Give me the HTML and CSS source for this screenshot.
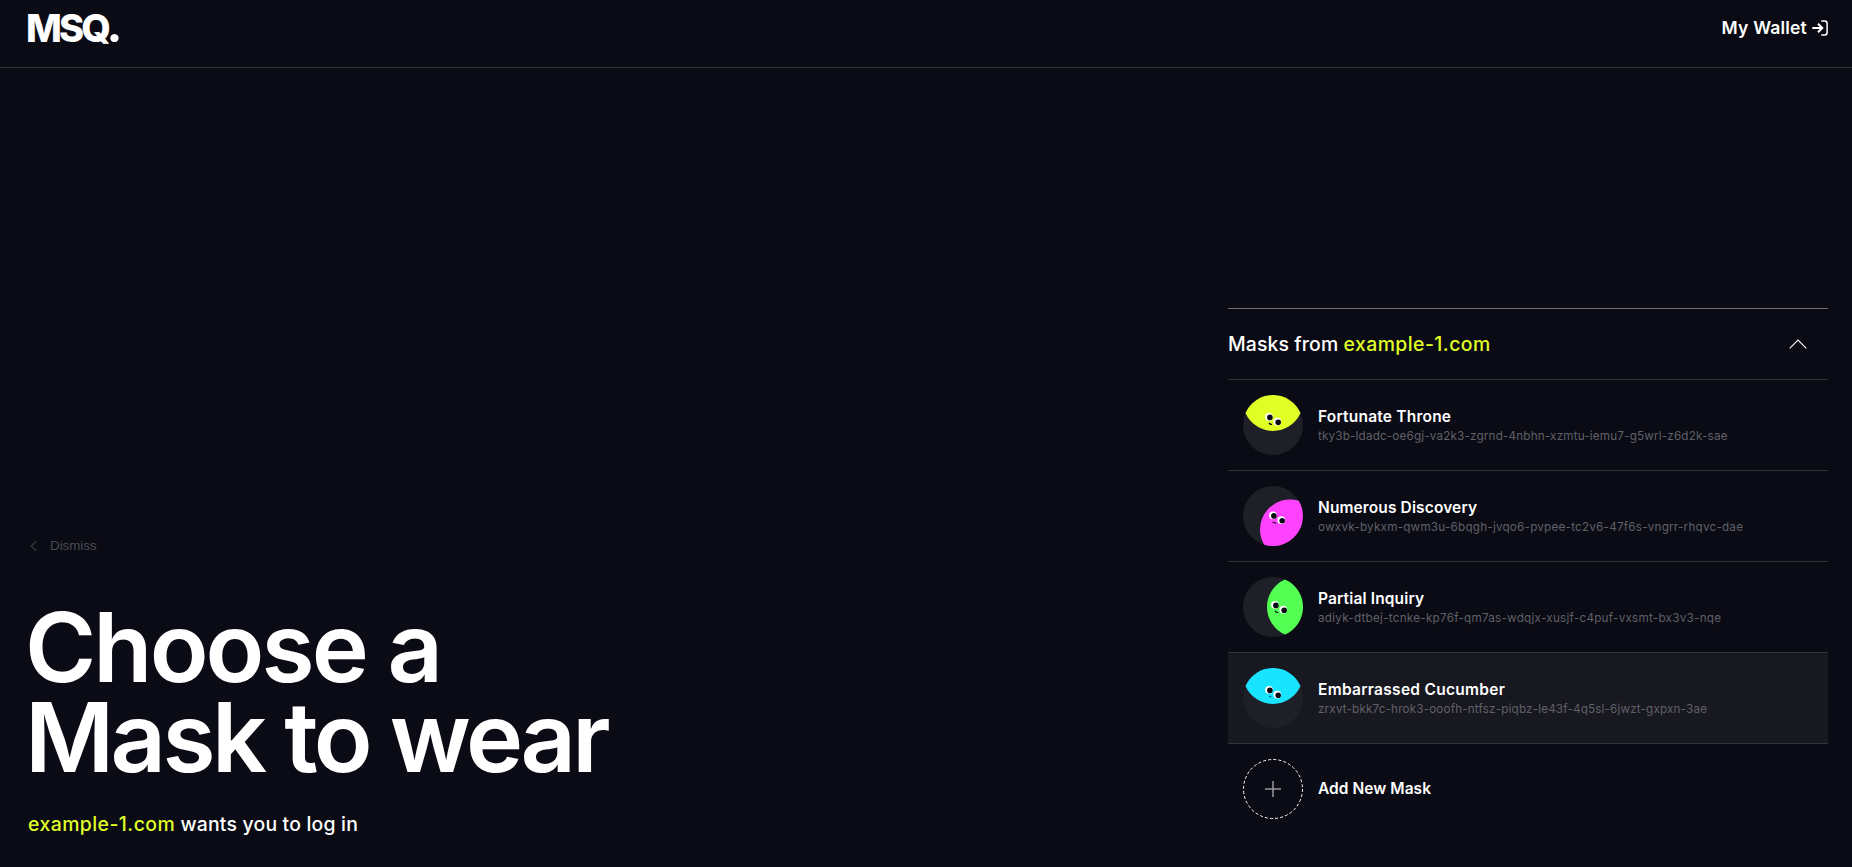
FILE: index.html
```
<!DOCTYPE html>
<html lang="en">
<head>
<meta charset="utf-8">
<title>MSQ.</title>
<link rel="stylesheet" href="styles.css">
</head>
<body>
<header class="header">
  <div class="logo">MSQ<span class="dot">.</span></div>
  <a class="wallet"><span>My Wallet</span>
    <svg width="16" height="16" viewBox="0 0 16 16" fill="none" stroke="#fff"><path d="M0.3 8H10.2M6 3.7L10.3 8L6 12.3" stroke-width="2"/><path d="M9.3 0.9H12.6Q15.1 0.9 15.1 3.4V12.6Q15.1 15.1 12.6 15.1H9.3" stroke-width="1.5"/></svg>
  </a>
</header>
<main class="page">
  <section class="intro">
    <button class="dismiss">
      <svg width="8" height="12" viewBox="0 0 8 12" fill="none" stroke="#3b3b42" stroke-width="1.1"><path d="M6.3 1L1.2 6L6.3 11"/></svg>
      <span>Dismiss</span>
    </button>
    <h1 class="title"><span class="line1">Choose a</span><br>Mask to wear</h1>
    <p class="sub"><span class="site">example-1.com</span> <span class="wants">wants you to log in</span></p>
  </section>
  <section class="masks">
    <div class="masks-head">
      <h2 class="masks-title">Masks from <span class="site">example-1.com</span></h2>
      <svg width="18" height="10" viewBox="0 0 18 10" fill="none" stroke="#fff" stroke-width="1.1"><path d="M0.7 9.3L9 1L17.3 9.3"/></svg>
    </div>
    <div class="mask">
      <svg class="face" viewBox="0 0 60 60"><circle cx="30" cy="30" r="30" fill="#1f1f28"/><path d="M2.5 18A30 30 0 0 1 57.5 18A30 30 0 0 1 2.5 18Z" fill="#e0ff25"/><g transform="translate(26 21.8)"><circle r="3.9" fill="#fff"/><circle cx="8.3" cy="4.8" r="3.9" fill="#fff"/><circle cx=".9" cy=".6" r="2.8" fill="#0a0b15"/><circle cx="9.2" cy="5.4" r="2.8" fill="#0a0b15"/><path d="M0 6.2Q1.3 8 3 7.5" fill="none" stroke="#0a0b15" stroke-width="1.4"/></g></svg>
      <div class="info"><div class="name n1">Fortunate Throne</div><div class="id i1">tky3b-ldadc-oe6gj-va2k3-zgrnd-4nbhn-xzmtu-iemu7-g5wrl-z6d2k-sae</div></div>
    </div>
    <div class="mask">
      <svg class="face" viewBox="0 0 60 60"><circle cx="30" cy="30" r="30" fill="#1f1f28"/><path d="M55.8 14.8A30 30 0 0 1 21.2 58.7A30 30 0 0 1 55.8 14.8Z" fill="#ff42ff"/><g transform="translate(30 29.3)"><circle r="3.9" fill="#fff"/><circle cx="8.3" cy="4.8" r="3.9" fill="#fff"/><circle cx=".9" cy=".6" r="2.8" fill="#0a0b15"/><circle cx="9.2" cy="5.4" r="2.8" fill="#0a0b15"/><path d="M-.5 7Q1.3 6.6 3 8.2" fill="none" stroke="#0a0b15" stroke-width="1.1"/></g></svg>
      <div class="info"><div class="name n2">Numerous Discovery</div><div class="id i2">owxvk-bykxm-qwm3u-6bqgh-jvqo6-pvpee-tc2v6-47f6s-vngrr-rhqvc-dae</div></div>
    </div>
    <div class="mask">
      <svg class="face" viewBox="0 0 60 60"><circle cx="30" cy="30" r="30" fill="#1f1f28"/><path d="M42 2.5A30 30 0 0 1 42 57.5A30 30 0 0 1 42 2.5Z" fill="#52ff52"/><g transform="translate(32 27.8)"><circle r="3.9" fill="#fff"/><circle cx="8.3" cy="4.8" r="3.9" fill="#fff"/><circle cx=".9" cy=".6" r="2.8" fill="#0a0b15"/><circle cx="9.2" cy="5.4" r="2.8" fill="#0a0b15"/><path d="M0 6Q1 8.2 3.2 7.6" fill="none" stroke="#0a0b15" stroke-width="1.1"/></g></svg>
      <div class="info"><div class="name n3">Partial Inquiry</div><div class="id i3">adiyk-dtbej-tcnke-kp76f-qm7as-wdqjx-xusjf-c4puf-vxsmt-bx3v3-nqe</div></div>
    </div>
    <div class="mask active">
      <svg class="face" viewBox="0 0 60 60"><circle cx="30" cy="30" r="30" fill="#1f1f28"/><path d="M2.5 18A30 30 0 0 1 57.5 18A30 30 0 0 1 2.5 18Z" fill="#19e4ff"/><g transform="translate(26 21.8)"><circle r="3.9" fill="#fff"/><circle cx="8.3" cy="4.8" r="3.9" fill="#fff"/><circle cx=".9" cy=".6" r="2.8" fill="#0a0b15"/><circle cx="9.2" cy="5.4" r="2.8" fill="#0a0b15"/><path d="M0 6.8Q1.5 6 2.2 7.8" fill="none" stroke="#0a6a80" stroke-width="1.1"/></g></svg>
      <div class="info"><div class="name n4">Embarrassed Cucumber</div><div class="id i4">zrxvt-bkk7c-hrok3-ooofh-ntfsz-piqbz-le43f-4q5sl-6jwzt-gxpxn-3ae</div></div>
    </div>
    <div class="mask add">
      <svg class="face" viewBox="0 0 60 60" fill="none" stroke="#fff"><circle cx="30" cy="30" r="29.5" stroke-dasharray="3 2.15"/><path d="M22 30H38M30 22V38" stroke="#98989d" stroke-width="1.5"/></svg>
      <div class="name n5">Add New Mask</div>
    </div>
  </section>
</main>
</body>
</html>
```
FILE: styles.css
```
* { box-sizing: border-box; margin: 0; padding: 0; }
body {
  height: 867px;
  display: flex;
  flex-direction: column;
  overflow: hidden;
  background: #0a0b15;
  color: #fff;
  font-family: Inter, "Open Sans", sans-serif;
}
.header {
  height: 68px;
  flex: none;
  display: flex;
  justify-content: space-between;
  align-items: flex-start;
  padding: 13px 24px 0 26px;
  border-bottom: 1px solid #32333b;
}
.logo { display: flex; align-items: baseline; height: 28px; margin-top: -4px; font: 800 38px/28px Inter, sans-serif; letter-spacing: -2.9px; }
.dot { margin-left: .5px; font: 900 50px/28px Lato, sans-serif; }
.wallet {
  display: flex;
  align-items: center;
  gap: 5px;
  padding-top: 3px;
  font-size: 17.5px;
  font-weight: 600;
  line-height: 24px;
  letter-spacing: .2px;
}
.page {
  flex: 1;
  display: flex;
  justify-content: space-between;
  align-items: flex-end;
  padding: 0 24px 31px 28px;
}
.dismiss {
  display: flex;
  align-items: center;
  gap: 12px;
  margin: 0 0 48px 2px;
  border: 0;
  background: none;
  color: #4b4b52;
  font: 13.33px/16px "Liberation Sans", sans-serif;
}
.title {
  margin: 0 0 30px -3px;
  font-size: 96.7px;
  font-weight: 600;
  line-height: 90px;
  letter-spacing: -3.6px;
  white-space: nowrap;
}
.line1 { letter-spacing: -2.9px; }
.sub { font-size: 19.4px; font-weight: 550; line-height: 24px; letter-spacing: .2px; }
.site { color: #e0ff25; letter-spacing: .45px; }
.masks { width: 600px; margin-bottom: 2px; }
.masks-head {
  height: 71px;
  display: flex;
  justify-content: space-between;
  align-items: center;
  padding-right: 21px;
  border-top: 1px solid #6d6d73;
}
.masks-title { font-size: 19.4px; font-weight: 550; letter-spacing: .12px; }
.mask {
  height: 91px;
  display: flex;
  align-items: center;
  gap: 15px;
  padding: 0 15px;
  border-top: 1px solid #32333b;
}
.active { background: #181821; }
.face { width: 60px; height: 60px; flex: none; }
.info { display: flex; flex-direction: column; gap: 2px; }
.name { font-size: 15.5px; font-weight: 600; line-height: 20px; white-space: nowrap; }
.id {
  overflow: hidden;
  color: #606167;
  font-size: 11.7px;
  line-height: 14px;
  white-space: nowrap;
}
.n1 { letter-spacing: .21px; }
.n2 { letter-spacing: .12px; }
.n3 { letter-spacing: .14px; }
.n4 { letter-spacing: .29px; }
.n5 { letter-spacing: .05px; }
.i1 { letter-spacing: .17px; }
.i2 { letter-spacing: .22px; }
.i3 { letter-spacing: .25px; }
.i4 { letter-spacing: .16px; }
```
